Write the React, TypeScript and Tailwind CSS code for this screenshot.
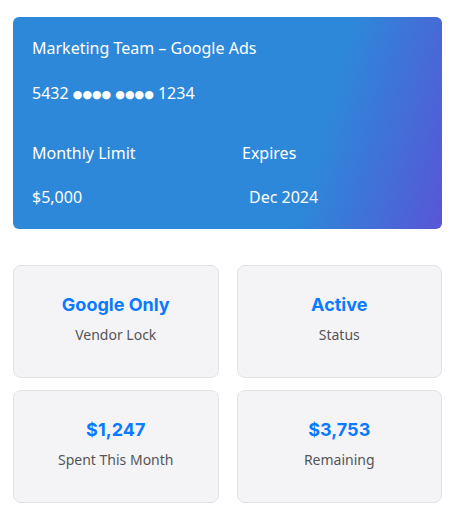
import React from 'react';

const stats = [
    { value: 'Google Only', label: 'Vendor Lock' },
    { value: 'Active', label: 'Status' },
    { value: '$1,247', label: 'Spent This Month' },
    { value: '$3,753', label: 'Remaining' },
];

const Dots = () => (
    <span className="font-['DejaVu_Sans',sans-serif] text-[11px] leading-none align-[1px]">●●●●</span>
);

export default function App() {
    return (
        <div className="min-h-screen bg-white px-[13px] pt-[17px] font-['Noto_Sans','Open_Sans',sans-serif]">
            {/* Card */}
            <div className="h-[212px] rounded-[6px] bg-[linear-gradient(105deg,#2d88d9_70%,#5856d6)] px-[19px] pt-[20px] text-white">
                <div className="text-[16px] leading-[22px]">Marketing Team – Google Ads</div>
                <div className="mt-[23px] h-[22px] text-[16px] leading-[22px]">
                    5432 <Dots /> <Dots /> 1234
                </div>
                <div className="mt-[38px] flex">
                    <div className="w-[210px]">
                        <div className="text-[16px] leading-[22px]">Monthly Limit</div>
                        <div className="mt-[22px] text-[16px] leading-[22px]">$5,000</div>
                    </div>
                    <div>
                        <div className="text-[16px] leading-[22px]">Expires</div>
                        <div className="mt-[22px] pl-[7px] text-[16px] leading-[22px]">Dec 2024</div>
                    </div>
                </div>
            </div>

            {/* Stats */}
            <div className="mt-[36px] grid w-[429px] grid-cols-2 gap-x-[18px] gap-y-[12px]">
                {stats.map((s) => (
                    <div
                        key={s.label}
                        className="flex h-[113px] flex-col items-center justify-center rounded-[8px] border border-[#e2e2e6] bg-[#f4f4f7] pb-[6px]"
                    >
                        <div className="font-['Inter',sans-serif] text-[18px] font-bold leading-[24px] text-[#0a7aff]">
                            {s.value}
                        </div>
                        <div className="mt-[8px] text-[14px] leading-[20px] text-[#555]">{s.label}</div>
                    </div>
                ))}
            </div>
        </div>
    );
}
